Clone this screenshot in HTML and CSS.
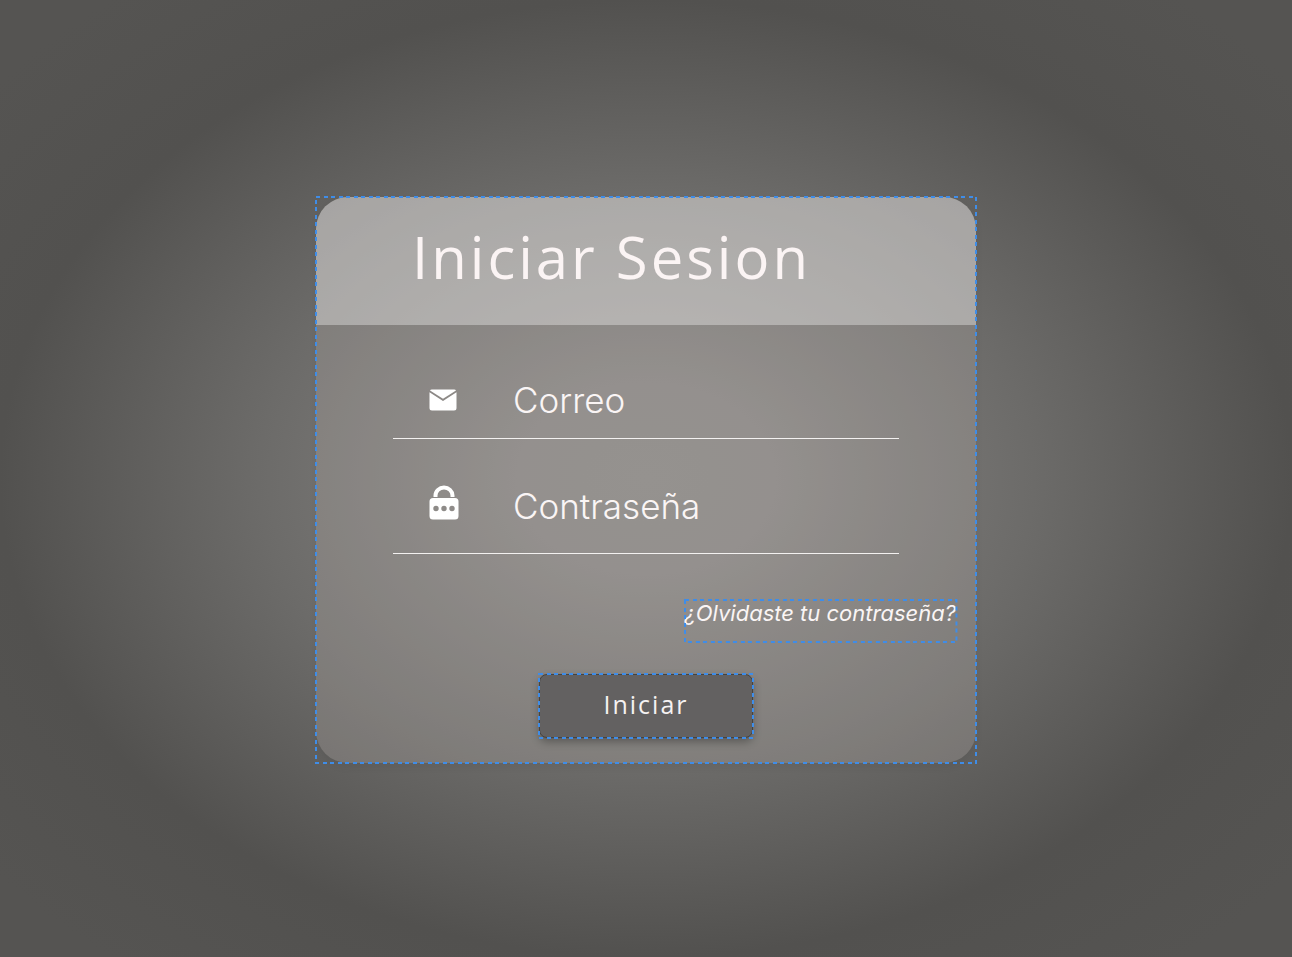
FILE: index.html
```html
<!DOCTYPE html>
<html lang="es">
<head>
<meta charset="utf-8">
<meta name="viewport" content="width=device-width, initial-scale=1">
<title>Iniciar Sesion</title>
<link rel="stylesheet" href="styles.css">
</head>
<body class="page">
<main class="login outlined">
  <div class="panel">
    <header class="panel-header">
      <h1 class="title">Iniciar Sesion</h1>
    </header>
    <form class="form">
      <div class="fields">
        <div class="field">
          <label class="field-icon" for="correo" aria-label="Correo">
            <svg width="28" height="22" viewBox="0 0 28 22" fill="#fff" aria-hidden="true">
              <path d="M2.800 .5H25.200Q26.500 .6 27 1.500L14 9.800 1 1.500Q1.500 .6 2.800 .5Z"/>
              <path d="M.5 3.200 14 12 27.500 3.200V19Q27.500 21.500 25 21.500H3Q.5 21.500 .5 19Z"/>
            </svg>
          </label>
          <input class="input" id="correo" type="email" placeholder="Correo">
        </div>
        <div class="field field-tall">
          <label class="field-icon field-icon-lock" for="clave" aria-label="Contraseña">
            <svg width="30" height="35" viewBox="0 0 30 35" aria-hidden="true">
              <path d="M6.500 12V10.500a8.500 8 0 0 1 17 0V12" fill="none" stroke="#fff" stroke-width="4"/>
              <path fill="#fff" fill-rule="evenodd" d="M4 13H26Q29.500 13 29.500 16.500V31Q29.500 34.500 26 34.500H4Q.5 34.500 .5 31V16.500Q.5 13 4 13ZM4.300 23.500a2.700 2.700 0 1 0 5.400 0a2.700 2.700 0 1 0-5.400 0ZM12.300 23.500a2.700 2.700 0 1 0 5.400 0a2.700 2.700 0 1 0-5.400 0ZM20.300 23.500a2.700 2.700 0 1 0 5.400 0a2.700 2.700 0 1 0-5.400 0Z"/>
            </svg>
          </label>
          <input class="input" id="clave" type="password" placeholder="Contraseña">
        </div>
      </div>
      <a class="forgot outlined" href="#">¿Olvidaste tu contraseña?
        <svg class="outline" aria-hidden="true"><rect class="dashes" width="100%" height="100%"/></svg>
      </a>
      <button class="submit outlined" type="submit">Iniciar
        <svg class="outline outline-button" aria-hidden="true"><rect class="dashes" width="100%" height="100%"/></svg>
      </button>
    </form>
  </div>
  <svg class="outline" aria-hidden="true"><rect class="dashes" width="100%" height="100%"/></svg>
</main>
</body>
</html>
```
FILE: styles.css
```css
* {
  box-sizing: border-box;
}

.page {
  margin: 0;
  min-height: 100vh;
  padding: 23px 16px 20px;
  display: flex;
  align-items: center;
  justify-content: center;
  font-family: Inter, "Liberation Sans", sans-serif;
  color: #faf5f5;
  background: radial-gradient(ellipse closest-side, #868482 0%, #848280 20%, #6c6b69 60%, #52514f 100%, #555452 130%);
}

.outlined {
  position: relative;
}

.outline {
  position: absolute;
  inset: 0;
  width: 100%;
  height: 100%;
  overflow: visible;
  pointer-events: none;
}

.outline-button {
  inset: -1px;
  width: calc(100% + 2px);
  height: calc(100% + 2px);
}

.dashes {
  fill: none;
  stroke: #3f8de8;
  stroke-width: 2px;
  stroke-dasharray: 4 4 4 3;
}

.login {
  width: 100%;
  max-width: 660px;
}

.panel {
  overflow: hidden;
  border-radius: 32px;
  background: rgba(205, 194, 190, 0.22);
  box-shadow: 0 4px 8px rgba(0, 0, 0, 0.06);
}

.panel-header {
  padding: 20px 96px 29px;
  background: rgba(255, 255, 255, 0.34);
}

.title {
  margin: 0;
  color: #fbf4f4;
  font: 400 58px/79px "Open Sans", "Noto Sans", sans-serif;
  letter-spacing: 3px;
}

.form {
  display: flex;
  flex-direction: column;
  padding: 36px 20px 25px;
}

.fields {
  padding: 0 57px;
}

.field {
  display: flex;
  align-items: center;
  height: 78px;
  padding-left: 36px;
  border-bottom: 1px solid #f3f1f0;
}

.field-tall {
  height: 115px;
  padding-top: 20px;
}

.field-icon {
  display: flex;
  width: 84px;
}

.field-icon-lock {
  padding-bottom: 8px;
}

.input {
  flex: 1;
  min-width: 0;
  padding: 0;
  border: 0;
  outline: 0;
  background: none;
  color: inherit;
  font: 300 35px/48px Inter, "Liberation Sans", sans-serif;
}

.input::placeholder {
  color: #faf5f5;
  opacity: 1;
}

.forgot {
  align-self: flex-end;
  margin-top: 46px;
  padding-bottom: 16px;
  font-size: 22px;
  line-height: 26px;
  font-style: italic;
  color: inherit;
  text-decoration: none;
}

.submit {
  align-self: center;
  width: 214px;
  height: 64px;
  margin-top: 32px;
  padding: 0 0 4px;
  border: 1px solid #444342;
  border-radius: 8px;
  background: #636161;
  color: #f5f2f2;
  box-shadow: 0 4px 8px rgba(0, 0, 0, 0.3);
  font: 400 25px/32px "Open Sans", "Noto Sans", sans-serif;
  letter-spacing: 2px;
}
```
